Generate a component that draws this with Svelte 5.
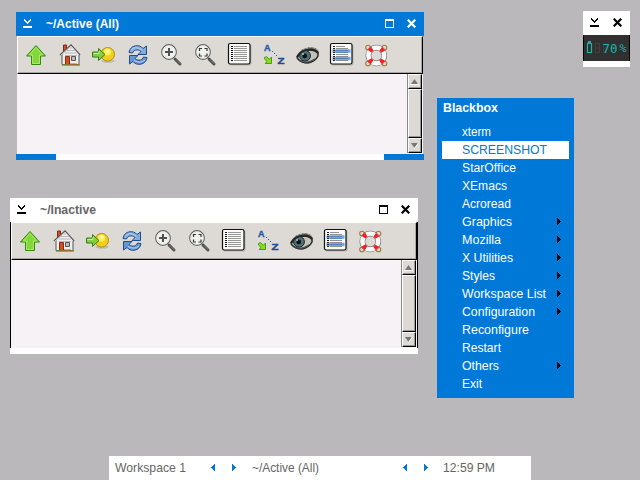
<script>
  const menu = [
    ['xterm', 29, false], ['SCREENSHOT', 85, false], ['StarOffice', 54, false], ['XEmacs', 45, false],
    ['Acroread', 49, false], ['Graphics', 50, true], ['Mozilla', 39, true], ['X Utilities', 51, true],
    ['Styles', 33, true], ['Workspace List', 84, true], ['Configuration', 73, true], ['Reconfigure', 67, false],
    ['Restart', 39, false], ['Others', 37, true], ['Exit', 20, false]
  ];
  const windows = [
    { title: '~/Active (All)', width: 73, active: true },
    { title: '~/Inactive', width: 56, active: false }
  ];
  const icons = ['up', 'home', 'go', 'reload', 'zoom', 'fit', 'list', 'sort', 'eye', 'detail', 'help'];
  const offsets = [5, 39, 72, 107, 140, 174, 208, 242, 277, 310, 345];
</script>

{#snippet label(text, width, bold = false)}
  <svg class="label" class:bold width={width + 2} height="18"><text x="0" y="13" textLength={width} lengthAdjust="spacingAndGlyphs">{text}</text></svg>
{/snippet}

{#snippet iconify()}
  <svg class="btn" width="9" height="9" shape-rendering="crispEdges"><path fill="currentColor" d="M0 7h9v2H0zM1 0h1v1h1v1h1v1h1V2h1V1h1V0h1v2H7v1H6v1H5v1H4V4H3V3H2V2H1z" /></svg>
{/snippet}
{#snippet maximize()}
  <svg class="btn" width="9" height="9" shape-rendering="crispEdges"><path fill="currentColor" fill-rule="evenodd" d="M0 0h9v9H0zM1 2v6h7V2z" /></svg>
{/snippet}
{#snippet close()}
  <svg class="btn" width="9" height="9"><path d="m.7.7 7.600 7.600M8.300.7.7 8.300" stroke="currentColor" stroke-width="2.200" /></svg>
{/snippet}

{#snippet arrow(dir)}
  <svg class="arrow" width="5" height="8" shape-rendering="crispEdges"><path fill="currentColor" d={dir === 'left' ? 'M4 0v7H3V6H2V5H1V4H0V3h1V2h1V1h1V0z' : 'M0 0h1v1h1v1h1v1h1v1H3v1H2v1H1v1H0z'} /></svg>
{/snippet}

{#snippet icon(kind)}
  <svg class="icon" viewBox="0 0 26 26" width="26" height="26">
    {#if kind === 'up'}
      <path d="M13 3.500 22.500 14h-5v8.500h-9V14h-5z" fill="#82d73a" stroke="#3a8411" />
      <path d="m13 5.500 6.500 7.500h-3v8.500h-7V13h-3z" fill="none" stroke="#b4ee70" stroke-width=".8" />
    {:else if kind === 'home'}
      <path d="M6.500 3h3v7h-3z" fill="#d94b21" stroke="#792c13" />
      <path d="M5 12 14 4l8 8v10.500H5z" fill="#eee" stroke="#555" />
      <path d="M8 11h12M10 8.500h8M8 13.500h12M13 6h2" stroke="#aaa" stroke-width=".8" />
      <path d="M3 13 14 3l9 10" fill="none" stroke="#555" stroke-width="1.500" />
      <path d="M4 13 14 4l8 9" fill="none" stroke="#fff" stroke-width=".7" />
      <path d="M8.500 14.500h4v8h-4z" fill="#d64c22" stroke="#8b2b0b" />
      <path d="M14.500 14.500h4v4h-4z" fill="#bbb" stroke="#555" />
      <path d="M5 23h18" stroke="#72923c" stroke-width="1.500" />
      <path d="M13 22h7" stroke="#d94b21" />
    {:else if kind === 'go'}
      <ellipse cx="18" cy="19" rx="6.500" ry="1.800" fill="#9c9b96" opacity=".5" />
      <circle cx="17.700" cy="12.300" r="6.800" fill="#f2cf1c" stroke="#b88d17" />
      <circle cx="17.500" cy="10" r="3.500" fill="#fdf05c" />
      <circle cx="18" cy="9" r="1.500" fill="#fffcc0" />
      <path d="M2.500 10h6V6.500l6.500 6-6.500 6V15h-6z" fill="#82cf43" stroke="#397f15" />
      <path d="M3.500 11.500H9V9" fill="none" stroke="#c4f28a" />
    {:else if kind === 'reload'}
      <path d="M4 10.500C5 2.500 15 2 18 6.500L21.500 4v8.500H13l3-3C12.500 6.500 8.500 8 7.500 11z" fill="#83add9" stroke="#204c91" />
      <path d="M22 15.500C21 23.500 11 24 8 19.500L4.500 22v-8.500H13l-3 3c3.500 3 7.500 1.500 8.500-1.500z" fill="#6796d0" stroke="#204c91" />
      <path d="M6 8.500Q10 3 17 8M20 18q-5 4-11 .5" fill="none" stroke="#bad2ec" />
    {:else if kind === 'zoom' || kind === 'fit'}
      <path d="m17 17 5 5" stroke="#4b504e" stroke-width="3" stroke-linecap="round" />
      <path d="m18 17.500 4.500 4.500" stroke="#858986" stroke-width=".8" />
      <circle cx="11" cy="10" r="7.300" fill="#f1f1ee" stroke="#60635f" stroke-width="1.200" />
      <circle cx="11" cy="10" r="6.300" fill="none" stroke="#dfe1de" stroke-width=".8" />
      {#if kind === 'zoom'}
        <path d="M7 10h8M11 6v8" stroke="#4e514e" stroke-width="2" />
      {:else}
        <path d="M7.500 9V6.500H10M12.500 6.500H15V9M15 11.500V14h-2.500M10 14H7.500v-2.500" fill="none" stroke="#353835" stroke-width="1.200" />
      {/if}
    {:else if kind === 'list' || kind === 'detail'}
      <rect x="3" y="2" width="22.500" height="21.500" rx="2" fill="#8c8983" opacity=".45" />
      <rect x="2.500" y="1.500" width="21.500" height="20.500" rx="1.800" fill="#fafaf8" stroke="#111" stroke-width="1.200" />
      {#if kind === 'list'}
        <path d="M8 4.500h13M8 6.500h13M8 8.500h13M8 10.500h13M8 12.500h13M8 14.500h13M8 16.500h13M8 18.500h13" stroke="#8b8b8b" stroke-width=".9" />
        <path d="M6 4v16" stroke="#111" stroke-width="2" stroke-dasharray="1 1" />
      {:else}
        <path d="M4.500 9h18M4.500 16.500h18" stroke="#69aaf3" stroke-width="3.500" />
        <path d="M8 4.500h9M8 6.500h12M8 12.500h12M8 14.500h12M8 18.500h12" stroke="#777" stroke-width=".8" />
        <path d="M8 8.500h12M8 10.500h12M8 16.500h12" stroke="#4a78ad" stroke-width=".8" />
        <path d="M6 4v16" stroke="#222" stroke-width="2" stroke-dasharray="1 1" />
      {/if}
    {:else if kind === 'sort'}
      <text x="4" y="9" font-size="8.500" font-weight="bold" textLength="6.500" lengthAdjust="spacingAndGlyphs" fill="#285ca8" stroke="#285ca8" stroke-width=".4">A</text>
      <text x="17.500" y="22" font-size="8.500" font-weight="bold" textLength="7" lengthAdjust="spacingAndGlyphs" fill="#204c91" stroke="#204c91" stroke-width=".4">Z</text>
      <path d="M12 9h1v1h-1zM14 11h1v1h-1zM16 13h1v1h-1z" fill="#345b86" />
      <path d="M4.500 15.500 6.500 14.500l2.800 2.800 2.200-2.300v6.500H5l2.200-2-2.700-2.500z" fill="#86dd28" stroke="#4c9e10" />
    {:else if kind === 'eye'}
      <path d="M1 15Q5 6 15 5q7 0 9 5-1 7-9 10Q6 22 1 15" fill="#5f5d58" opacity=".5" />
      <path d="M2 16Q5 10 12 8.500q7-1.500 11 2.500v3q-3 6-10 7-7 0-11-5" fill="#c3c1ba" stroke="#282826" stroke-width="1.500" />
      <circle cx="10" cy="13.800" r="5.400" fill="#4f7078" stroke="#172529" />
      <circle cx="9.700" cy="14" r="2.400" fill="#081416" />
      <circle cx="8" cy="12" r="1" fill="#b1c4c6" />
      <path d="M2 15Q6 8 14 7.500q6-.5 9 3.500" fill="none" stroke="#262725" stroke-width="2.200" />
      <path d="M8 8.500 7 7M11 7.500 10 6M14 7l-.5-2M17 7V5M20 8l1-2" stroke="#555" stroke-width=".6" />
      <path d="M4 18q7 5 16-1" fill="none" stroke="#4a4945" stroke-width="1.200" />
    {:else}
      <g fill="none" stroke="#a27a42" stroke-width="1.100">
        <circle cx="5" cy="5.500" r="2.300" /><circle cx="21.500" cy="5.500" r="2.300" /><circle cx="5" cy="21.500" r="2.300" /><circle cx="21.500" cy="21.500" r="2.300" />
      </g>
      <circle cx="13.300" cy="13.500" r="7.900" fill="none" stroke="#707070" stroke-width="5.600" />
      <circle cx="13.300" cy="13.500" r="7.900" fill="none" stroke="#fafafa" stroke-width="4.500" />
      <circle cx="13.300" cy="13.500" r="7.900" fill="none" stroke="#f81f22" stroke-width="4.700" stroke-dasharray="3.700 8.709" stroke-dashoffset="-4.350" />
    {/if}
  </svg>
{/snippet}

<main>
  {#each windows as win}
    <section class="window" class:active={win.active}>
      <header>{@render iconify()}<span class="title">{@render label(win.title, win.width, true)}</span>{@render maximize()}{@render close()}</header>
      <div class="client">
        <div class="toolbar">
          {#each icons as kind, i}<span class="slot" style:margin-left="{i ? offsets[i] - offsets[i - 1] - 26 : 5}px">{@render icon(kind)}</span>{/each}
        </div>
        <div class="body">
          <div class="scroll">
            <span class="step"><svg width="11" height="12"><path d="m5.500 4 3.500 5H2z" fill="#777" /><path d="M1 9.500h9" stroke="#fff" /></svg></span>
            <span class="thumb"></span>
            <span class="step"><svg width="11" height="12"><path d="M2 4h7L5.500 9z" fill="#777" /><path d="m9.500 4-4 5.500" stroke="#fff" /></svg></span>
          </div>
        </div>
      </div>
      <footer><i></i><i></i></footer>
    </section>
  {/each}

  <aside class="dock">
    <div class="dock-title">{@render iconify()}{@render close()}</div>
    <div class="battery">
      <svg width="45" height="26">
        <path d="M3.500 8.500h4v9h-4z" fill="none" stroke="#20b2aa" stroke-width="1.200" /><path d="M4 6h3v2H4z" fill="#20b2aa" />
        <path d="M11.500 8.500h4v9h-4zM11.500 13h4M19.500 8.500v9h4M19.500 13h4M27.500 13h4" fill="none" stroke="#3e3e3e" />
        <text x="18.500" y="17.500" textLength="15" lengthAdjust="spacingAndGlyphs">70</text>
        <text x="35.500" y="16.500" textLength="7" lengthAdjust="spacingAndGlyphs">%</text>
      </svg>
    </div>
  </aside>

  <nav class="menu">
    <div class="menu-title">{@render label('Blackbox', 55, true)}</div>
    {#each menu as item, i}
      <div class="item" class:selected={i === 1}>{@render label(item[0], item[1])}{#if item[2]}{@render arrow('right')}{/if}</div>
    {/each}
  </nav>

  <div class="taskbar">
    <span class="ws">{@render label('Workspace 1', 71)}</span>
    <span class="arrows">{@render arrow('left')}{@render arrow('right')}</span>
    <span class="task">{@render label('~/Active (All)', 67)}</span>
    <span class="arrows">{@render arrow('left')}{@render arrow('right')}</span>
    <span class="clock">{@render label('12:59 PM', 52)}</span>
  </div>
</main>

<style>
  :global(body) { margin: 0; }
  main { position: relative; width: 640px; height: 480px; overflow: hidden; background: #bbb8bb; font: 13.4px "Liberation Sans", Arial, sans-serif; }
  svg { display: block; flex: none; }
  .label { overflow: visible; fill: currentColor; }
  .bold { font-weight: bold; font-size: 13px; }
  .window { position: absolute; left: 10px; top: 198px; width: 408px; height: 156px; display: flex; flex-direction: column; background: #fff; color: #000; }
  .window.active { left: 16px; top: 12px; height: 148px; color: #fff; }
  header { height: 24px; display: flex; align-items: center; box-sizing: border-box; padding: 0 8px 1px 7px; flex: none; }
  .title { margin-left: 14px; flex: 1; color: #666; }
  .active .title { color: #fff; }
  header .btn + .btn { margin-left: 13px; }
  .active header { background: #0078d8; }
  .client { flex: 1; display: flex; flex-direction: column; border: solid #000; border-width: 0 1px; }
  .active .client { border-color: #bbb8bb; }
  .toolbar { height: 38px; box-sizing: border-box; display: flex; padding-top: 5px; background: #dddad5; border: solid #000; border-width: 1px 1px 1px 0; border-top-color: #fff; border-left: 1px solid #fff; box-shadow: inset -1px -1px #aaa7a2; }
  .body { flex: 1; display: flex; justify-content: flex-end; padding: 0 1px 1px 0; background: #f6f2f6; }
  .scroll { width: 15px; display: flex; flex-direction: column; box-sizing: border-box; border-left: 1px solid #888; background: #dddad5; }
  .step, .thumb { box-sizing: border-box; border: 1px solid #fff; border-right-color: #000; border-bottom-color: #000; box-shadow: inset -1px -1px #999; }
  .step { height: 15px; }
  .thumb { flex: 1; }
  footer { height: 6px; display: flex; justify-content: space-between; background: #fff; }
  .active footer i { width: 40px; background: #0078d8; }
  .dock { position: absolute; left: 583px; top: 11px; width: 47px; height: 56px; background: #fff; }
  .dock-title { height: 24px; box-sizing: border-box; display: flex; justify-content: space-between; padding: 7px 8px 0 7px; }
  .battery { height: 26px; background: #303030; border: solid #000; border-width: 0 1px; }
  .battery text { font-family: "DejaVu Sans Mono", monospace; font-size: 12px; fill: #20b2aa; }
  .battery text + text { font-size: 10px; }
  .menu { position: absolute; left: 437px; top: 98px; width: 137px; height: 300px; color: #fff; background: #0078d8; }
  .menu-title { height: 25px; padding: 1px 0 0 6px; box-sizing: border-box; }
  .item { height: 18px; display: flex; align-items: center; justify-content: space-between; margin: 0 5px; padding: 0 7px 0 20px; }
  .item .arrow { color: #000; }
  .item.selected { background: #fff; color: #0078d8; }
  .taskbar { position: absolute; left: 109px; top: 456px; width: 422px; height: 24px; display: flex; align-items: center; background: #fff; color: #666; }
  .ws { width: 96px; padding-left: 6px; }
  .arrows { width: 26px; display: flex; justify-content: space-between; color: #0078d8; padding-right: 15px; }
  .task { width: 151px; }
  .task + .arrows { padding-right: 14px; }
</style>
